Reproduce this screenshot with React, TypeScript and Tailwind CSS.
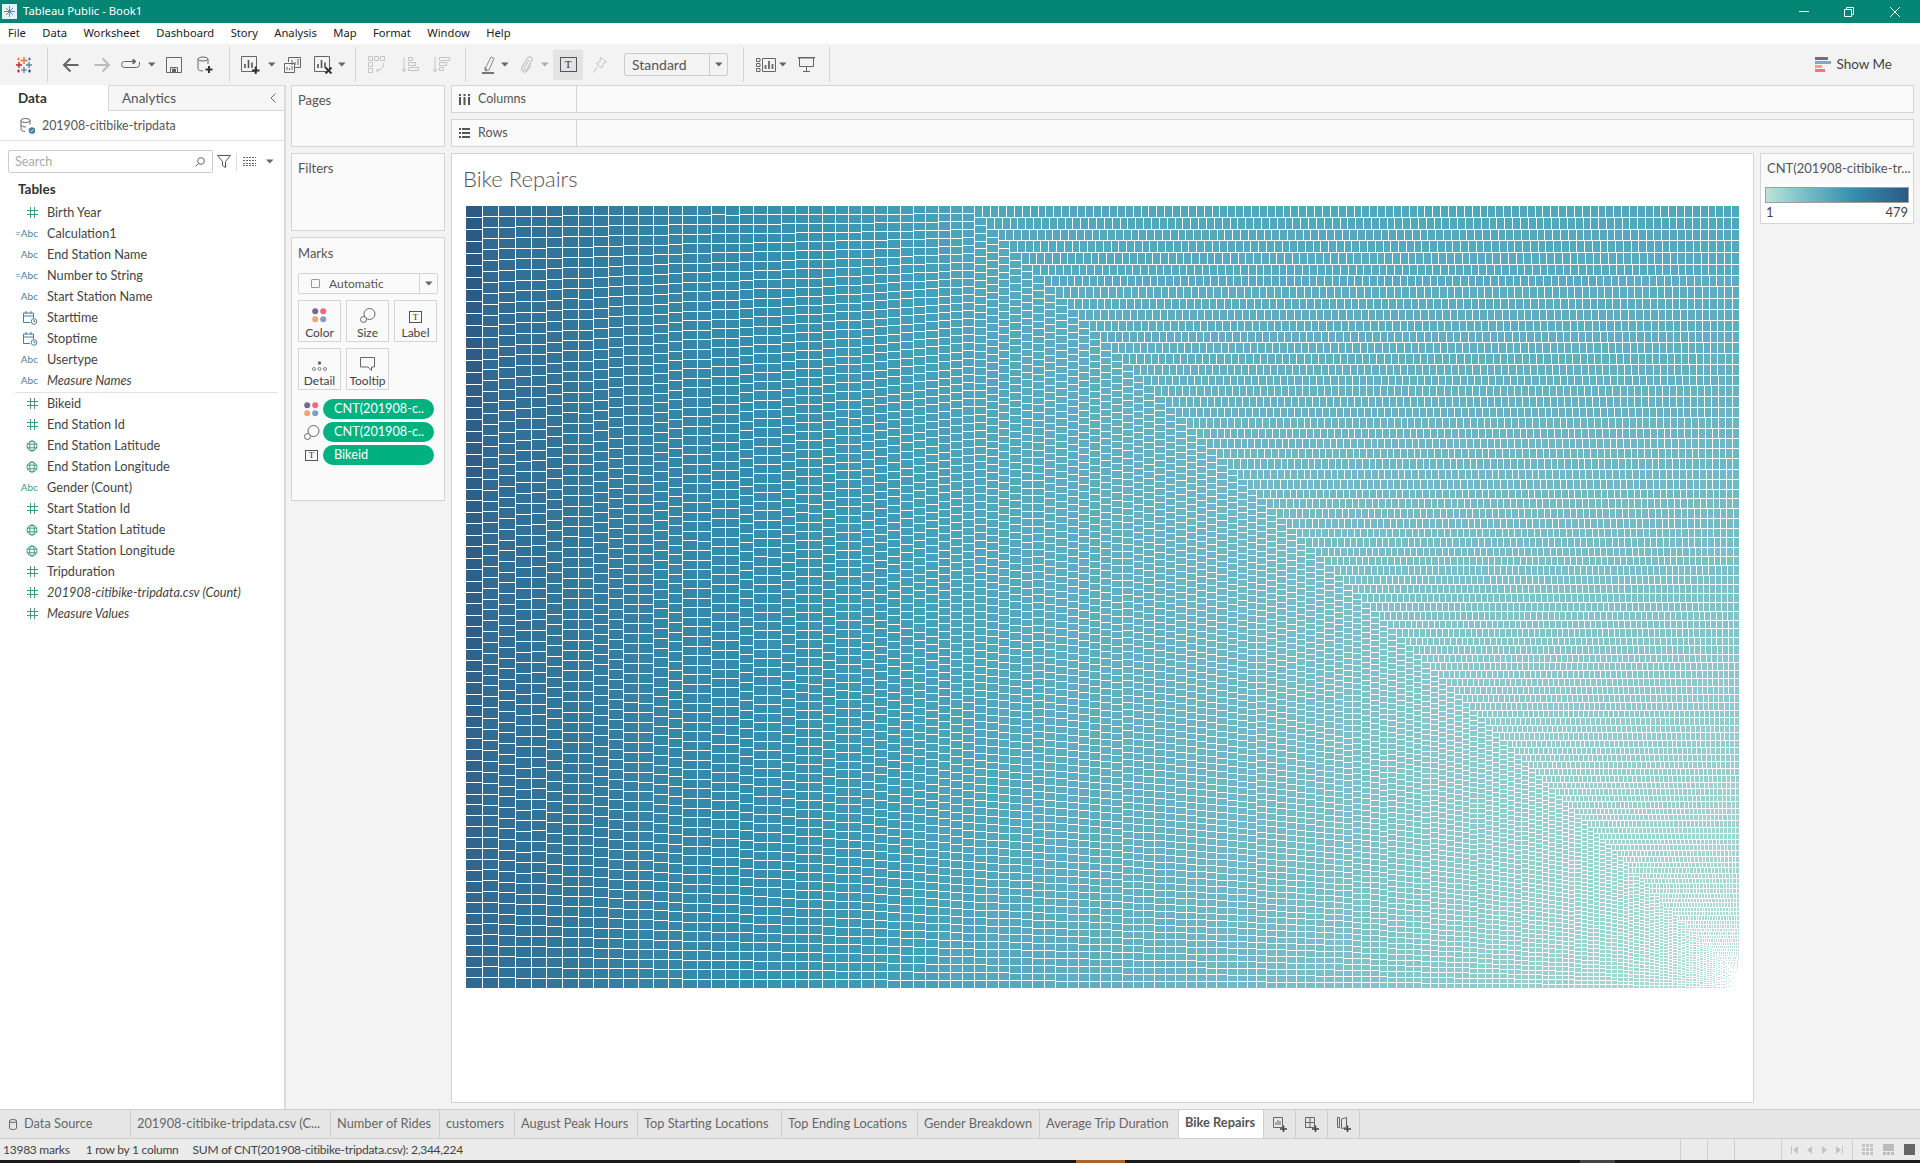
import { useMemo } from "react";

interface IconProps {
    className?: string;
}

const SVG_W = 1274;
const SVG_H = 783;
const MARK_COUNT = 13983;
const PALETTE = [
    "#bce4d8", "#aedcd5", "#a1d5d2", "#95cecf", "#89c8cc", "#7ec1ca", "#72bac6",
    "#66b2c2", "#59acbe", "#4ba5ba", "#419eb6", "#3b96b2", "#358ead", "#3586a7",
    "#347ea1", "#32779b", "#316f96", "#2f6790", "#2d608a", "#2c5985",
];
const BUCKETS = 76;

// rank fraction -> trip count, read off the cell sizes and colours
const VALUE_CURVE = [
    [0, 479], [0.005, 420], [0.02, 395], [0.07, 330], [0.218, 220],
    [0.6, 140], [0.9, 50], [1, 1],
];

const hexToRgb = (hex: string) => [
    parseInt(hex.slice(1, 3), 16),
    parseInt(hex.slice(3, 5), 16),
    parseInt(hex.slice(5, 7), 16),
];

const paletteAt = (t: number) => {
    const p = Math.min(0.9999, Math.max(0, t)) * (PALETTE.length - 1);
    const i = Math.floor(p);
    const a = hexToRgb(PALETTE[i]);
    const b = hexToRgb(PALETTE[i + 1]);
    const rgb = a.map((c, k) => Math.round(c + (b[k] - c) * (p - i)));
    return `rgb(${rgb.join(",")})`;
};

const markValue = (f: number) => {
    for (let i = 1; i < VALUE_CURVE.length; i++) {
        const [f1, v1] = VALUE_CURVE[i];
        if (f <= f1) {
            const [f0, v0] = VALUE_CURVE[i - 1];
            return v0 + ((v1 - v0) * (f - f0)) / (f1 - f0);
        }
    }
    return 1;
};

const buildTreemap = () => {
    const values: number[] = [];
    for (let i = 0; i < MARK_COUNT; i++) {
        values.push(markValue(i / MARK_COUNT));
    }
    const total = values.reduce((s, v) => s + v, 0);
    const scale = (SVG_W * SVG_H) / total;
    const paths: string[] = new Array(BUCKETS).fill("");

    let x = 0;
    let y = 0;
    let w = SVG_W;
    let h = SVG_H;
    let i = 0;
    while (i < MARK_COUNT && w > 0 && h > 0) {
        const vertical = w >= h - 10;
        const side = vertical ? h : w;
        let sum = 0;
        let best = Infinity;
        let end = i;
        let bestSum = 0;
        for (let j = i; j < MARK_COUNT; j++) {
            const next = sum + values[j] * scale;
            const thick = next / side;
            const along = side / (j - i + 1);
            const score = Math.abs(Math.log(thick / along / 1.5));
            if (score > best) break;
            best = score;
            sum = next;
            bestSum = next;
            end = j + 1;
        }
        const thick = bestSum / side;
        let pos = vertical ? y : x;
        for (let j = i; j < end; j++) {
            const len = (values[j] * scale) / thick;
            const cx = vertical ? x : pos;
            const cy = vertical ? pos : y;
            const cw = vertical ? thick : len;
            const ch = vertical ? len : thick;
            const x0 = Math.round(cx);
            const y0 = Math.round(cy);
            const pw = Math.round(cx + cw) - x0 - 1;
            const ph = Math.round(cy + ch) - y0 - 1;
            if (pw > 0 && ph > 0) {
                const t = (values[j] - 1) / 478;
                const b = Math.min(BUCKETS - 1, Math.floor(t * BUCKETS));
                paths[b] += `M${x0} ${y0}h${pw}v${ph}h${-pw}z`;
            }
            pos += len;
        }
        if (vertical) {
            x += thick;
            w -= thick;
        } else {
            y += thick;
            h -= thick;
        }
        i = end;
    }
    return paths;
};

const Treemap = () => {
    const paths = useMemo(buildTreemap, []);
    return (
        <svg width={SVG_W} height={SVG_H} shapeRendering="crispEdges" className="ml-[14px] shrink-0">
            {paths.map((d, b) => (
                <path key={b} d={d} fill={paletteAt((b + 0.5) / BUCKETS)} />
            ))}
        </svg>
    );
};

const Caret = ({ className = "" }: IconProps) => (
    <svg width="8" height="5" viewBox="0 0 8 5" className={className}>
        <path d="M0 0.5h7.5L3.75 4.5z" fill="#666" />
    </svg>
);

const TableauLogo = () => (
    <svg width="18" height="18" viewBox="0 0 18 18" strokeWidth="1.2" fill="none">
        <path d="M9 1v7M5.5 4.5h7" stroke="#e8762b" strokeWidth="1.4" />
        <path d="M9 11v6M6 14h6" stroke="#5b6591" />
        <path d="M4 6v6M1 9h6" stroke="#c72035" strokeWidth="1.4" />
        <path d="M14 6v6M11 9h6" stroke="#59879b" strokeWidth="1.4" />
        <path d="M3.5 1.5v3M2 3h3" stroke="#eb912b" />
        <path d="M14.5 1.5v3M13 3h3" stroke="#4e79a7" />
        <path d="M3.5 13.5v3M2 15h3" stroke="#c72035" />
        <path d="M14.5 13.5v3M13 15h3" stroke="#1f447e" />
    </svg>
);

const BackIcon = ({ color }: { color: string }) => (
    <svg width="17" height="16" viewBox="0 0 17 16" fill="none" stroke={color} strokeWidth="2">
        <path d="M16.5 8H2M8.5 1.5 2 8l6.5 6.5" />
    </svg>
);

const ForwardIcon = ({ color }: { color: string }) => (
    <svg width="17" height="16" viewBox="0 0 17 16" fill="none" stroke={color} strokeWidth="2">
        <path d="M0.5 8H15M8.5 1.5 15 8l-6.5 6.5" />
    </svg>
);

const LoopIcon = () => (
    <svg width="19" height="11" viewBox="0 0 19 11" fill="none" stroke="#666" strokeWidth="1">
        <path d="M12 2.5H3.5a3 3 0 0 0 0 6h12a3 3 0 0 0 3-3V3" />
        <path d="M12 0v5l3-2.5z" fill="#666" />
    </svg>
);

const SaveIcon = () => (
    <svg width="16" height="16" viewBox="0 0 16 16" fill="none" stroke="#666" strokeWidth="1">
        <path d="M0.5 0.5h15v15H0.5zM4.5 15.5v-5h7v5" />
        <path d="M6.5 12h3v3h-3z" fill="#666" />
    </svg>
);

const NewDataIcon = () => (
    <svg width="16" height="18" viewBox="0 0 16 18" fill="none" stroke="#666" strokeWidth="1">
        <ellipse cx="6" cy="3" rx="5" ry="2" />
        <path d="M1 3v10c0 1 2 2 5 2M11 3v5" />
        <path d="M8.5 13.5h7M12 10v7" stroke="#333" strokeWidth="2" />
    </svg>
);

const NewSheetIcon = ({ clear = false }: { clear?: boolean }) => (
    <svg width="19" height="18" viewBox="0 0 19 18" fill="none" stroke="#666" strokeWidth="1">
        <path d="M0.5 0.5h15v15H0.5z" />
        <path d="M4 12V8M7.5 12V4M11 12V6.5" strokeWidth="1.6" stroke="#555" />
        {clear ? (
            <path d="M11.5 11.5l6 6M17.5 11.5l-6 6" stroke="#333" strokeWidth="2" />
        ) : (
            <path d="M11 14.5h7.5M14.7 10.5v7.5" stroke="#333" strokeWidth="2" />
        )}
    </svg>
);

const DuplicateIcon = () => (
    <svg width="17" height="16" viewBox="0 0 17 16" fill="none" stroke="#666" strokeWidth="1">
        <path d="M4.5 5V0.5h12v10H11" />
        <path d="M0.5 6.5h10v9h-10z" fill="#f3f3f3" />
        <path d="M8 8V3M11 8V5M14 8V2M3 13v-3M5.5 13v-2M8 13v-4" />
    </svg>
);

const SwapIcon = () => (
    <svg width="18" height="17" viewBox="0 0 18 17" fill="none" stroke="#c4c4c4" strokeWidth="1">
        <path d="M0.5 0.5h4v4h-4zM6.5 0.5h4v4h-4zM12.5 0.5h4v4h-4zM0.5 6.5h4v4h-4zM0.5 12.5h4v4h-4z" />
        <path d="M15.5 7c.5 4-2 7-6.500 7.500M10.500 12.500 8.500 14.500l2 2" />
    </svg>
);

const SortIcon = ({ desc = false }: { desc?: boolean }) => (
    <svg width="17" height="16" viewBox="0 0 17 16" fill="none" stroke="#c4c4c4" strokeWidth="1">
        <path d="M2 0v14M0 12l2 3 2-3" />
        {desc ? (
            <path d="M6.500 0.500h10v3h-10zM6.500 5.500h7v3h-7zM6.500 10.500h4v3h-4z" />
        ) : (
            <path d="M6.500 0.500h4v3h-4zM6.500 5.500h7v3h-7zM6.500 10.500h10v3h-10z" />
        )}
    </svg>
);

const HighlightIcon = () => (
    <svg width="13" height="18" viewBox="0 0 13 18">
        <path d="M3 13 9 1l3 1.500L7 14l-3.500 1z" fill="none" stroke="#888" />
        <path d="M2 11l3.500 2-2 2.500z" fill="#888" />
        <path d="M0 17h12" stroke="#555" strokeWidth="1.600" />
    </svg>
);

const ClipIcon = () => (
    <svg width="12" height="17" viewBox="0 0 12 17" fill="none" stroke="#c4c4c4" strokeWidth="1.200">
        <path d="M8 4 3 12c-1 2 2 3 3 1l5-9c1-3-3-4-4.500-2L1 11c-2 4 3 7 5.500 3.500L10 9" />
    </svg>
);

const PinIcon = () => (
    <svg width="14" height="16" viewBox="0 0 14 16" fill="none" stroke="#c4c4c4" strokeWidth="1">
        <path d="M7.500 0.500l6 4.500-3 1-1.500 5-6-4.500 4-1.500zM4.500 9.500 0.500 15.500" />
    </svg>
);

const TextBoxIcon = ({ className = "" }: IconProps) => (
    <span className={`flex items-center justify-center border border-[#555] leading-none text-[#333] [font-family:'Liberation_Serif',serif] ${className}`}>
        T
    </span>
);

const ShowCardsIcon = () => (
    <svg width="20" height="14" viewBox="0 0 20 14" fill="none" stroke="#666" strokeWidth="1">
        <path d="M0.500 0.500h3.500v3H0.500zM0.500 5.500h3.500v3H0.500zM0.500 10.500h3.500v3H0.500zM6.500 0.500h13v13h-13z" />
        <path d="M9.500 11V7M13 11V3M16.500 11V6" strokeWidth="1.800" />
    </svg>
);

const PresentIcon = () => (
    <svg width="17" height="15" viewBox="0 0 17 15" fill="none" stroke="#666" strokeWidth="1">
        <path d="M0 0.750h17" strokeWidth="1.500" />
        <path d="M1.500 1v8.500h14V1M8.500 9.500v5M5 14.500h7" />
    </svg>
);

const ShowMeIcon = () => (
    <svg width="16" height="15" viewBox="0 0 16 15">
        <path d="M0 0h13v3H0z" fill="#7b6594" />
        <path d="M0 4h16v3H0z" fill="#83a5cf" />
        <path d="M0 8h7v3H0z" fill="#f4a876" />
        <path d="M0 12h10v3H0z" fill="#fb7186" />
    </svg>
);

const ColorDots = () => (
    <svg width="15" height="15" viewBox="0 0 15 15">
        <circle cx="3.200" cy="3.200" r="3" fill="#7b6594" />
        <circle cx="11.200" cy="3.200" r="3" fill="#ee6a7f" />
        <circle cx="3.200" cy="11.200" r="3" fill="#f0a578" />
        <circle cx="11.200" cy="11.200" r="3" fill="#7f9fca" />
    </svg>
);

const SizeIcon = () => (
    <svg width="16" height="15" viewBox="0 0 16 15" fill="none" stroke="#666" strokeWidth="1">
        <circle cx="9.500" cy="6" r="5.500" />
        <circle cx="3.500" cy="11.500" r="3" fill="#fafafa" />
    </svg>
);

const DetailIcon = () => (
    <svg width="15" height="10" viewBox="0 0 15 10" fill="none" stroke="#666" strokeWidth="0.800">
        <circle cx="7.500" cy="2" r="1.700" fill="#666" stroke="none" />
        <circle cx="2" cy="8" r="1.500" />
        <circle cx="7.500" cy="8" r="1.500" />
        <circle cx="13" cy="8" r="1.500" />
    </svg>
);

const TooltipIcon = () => (
    <svg width="15" height="14" viewBox="0 0 15 14" fill="none" stroke="#666" strokeWidth="1">
        <path d="M0.500 0.500h14v9.500h-3v3.500L8 10H0.500z" />
    </svg>
);

const HashIcon = () => (
    <svg width="11" height="11" viewBox="0 0 11 11" fill="none" stroke="#3f9c80" strokeWidth="1">
        <path d="M3.500 0v11M7.500 0v11M0 3.500h11M0 7.500h11" />
    </svg>
);

const GlobeIcon = () => (
    <svg width="12" height="12" viewBox="0 0 12 12" fill="none" stroke="#3f9c80" strokeWidth="1">
        <circle cx="6" cy="6" r="5" />
        <ellipse cx="6" cy="6" rx="2.300" ry="5" />
        <path d="M1 4.200h10M1 7.800h10" />
    </svg>
);

const CalendarIcon = () => (
    <svg width="15" height="14" viewBox="0 0 15 14" fill="none" stroke="#4d7f98" strokeWidth="1">
        <path d="M7 11.500H0.500v-9.500h10v5M0.500 5h10M3 0v3M8 0v3" />
        <circle cx="11" cy="10.500" r="2.800" />
        <path d="M11 9v1.500h1.500" />
    </svg>
);

const DataSourceIcon = () => (
    <svg width="15" height="16" viewBox="0 0 15 16" fill="none" stroke="#666" strokeWidth="1">
        <ellipse cx="5.500" cy="2.500" rx="4.500" ry="2" />
        <path d="M1 2.500v9c0 1 1.500 1.700 4 2M10 2.500v4M1 7c0 1 2 2 5 2" />
        <circle cx="12" cy="12.500" r="3.300" fill="#3f7fa6" stroke="none" />
        <path d="M10.500 12.500l1 1 2-2" stroke="#fff" />
    </svg>
);

const FilterIcon = () => (
    <svg width="14" height="13" viewBox="0 0 14 13" fill="none" stroke="#555" strokeWidth="1">
        <path d="M0.500 0.500h13L8.500 6.500v6l-3-2v-4z" />
    </svg>
);

const ListViewIcon = () => (
    <svg width="13" height="9" viewBox="0 0 13 9" fill="none" stroke="#666" strokeWidth="1" strokeDasharray="2 1">
        <path d="M0 0.500h13M0 3.500h13M0 6.500h13M0 8.500h13" />
    </svg>
);

const MagnifyIcon = () => (
    <svg width="10" height="10" viewBox="0 0 10 10" fill="none" stroke="#666" strokeWidth="1">
        <circle cx="6" cy="4" r="3.300" />
        <path d="M3.700 6.300 0.500 9.500" />
    </svg>
);

const TabSheetIcon = ({ kind }: { kind: "sheet" | "dash" | "story" }) => (
    <svg width="14" height="15" viewBox="0 0 14 15" fill="none" stroke="#666" strokeWidth="1">
        {kind === "sheet" && <path d="M0.500 0.500h9v10h-9zM3 8V5M5 8V3M7 8V4" />}
        {kind === "dash" && <path d="M0.500 0.500h9v10h-9zM0.500 5.500h9M5 0.500v10" />}
        {kind === "story" && <path d="M0.500 0.500h2v10h-2zM4.500 2l5-1.500v10l-5 1z" />}
        <path d="M7 12h7M10.500 8.500v6.500" stroke="#444" strokeWidth="1.500" />
    </svg>
);

const FIELDS_TOP = [
    { name: "Birth Year", icon: "hash" },
    { name: "Calculation1", icon: "calc" },
    { name: "End Station Name", icon: "abc" },
    { name: "Number to String", icon: "calc" },
    { name: "Start Station Name", icon: "abc" },
    { name: "Starttime", icon: "date" },
    { name: "Stoptime", icon: "date" },
    { name: "Usertype", icon: "abc" },
    { name: "Measure Names", icon: "abc", italic: true },
];

const FIELDS_BOTTOM = [
    { name: "Bikeid", icon: "hash" },
    { name: "End Station Id", icon: "hash" },
    { name: "End Station Latitude", icon: "globe" },
    { name: "End Station Longitude", icon: "globe" },
    { name: "Gender (Count)", icon: "abcGreen" },
    { name: "Start Station Id", icon: "hash" },
    { name: "Start Station Latitude", icon: "globe" },
    { name: "Start Station Longitude", icon: "globe" },
    { name: "Tripduration", icon: "hash" },
    { name: "201908-citibike-tripdata.csv (Count)", icon: "hash", italic: true },
    { name: "Measure Values", icon: "hash", italic: true },
];

const FieldIcon = ({ icon }: { icon: string }) => {
    if (icon === "hash") return <HashIcon />;
    if (icon === "globe") return <GlobeIcon />;
    if (icon === "date") return <CalendarIcon />;
    if (icon === "calc") return <span className="text-[10px] text-[#4d7f98]">=Abc</span>;
    if (icon === "abcGreen") return <span className="text-[10px] text-[#3f9c80]">Abc</span>;
    return <span className="text-[10px] text-[#4d7f98]">Abc</span>;
};

const FieldRow = ({ name, icon, italic }: { name: string; icon: string; italic?: boolean }) => (
    <div className="flex h-[21px] items-center">
        <div className="flex w-[38px] justify-end">
            <FieldIcon icon={icon} />
        </div>
        <span className={`ml-[9px] text-[12.7px] text-[#444] whitespace-nowrap ${italic ? "italic" : ""}`}>
            {name}
        </span>
    </div>
);

const MarkButton = ({ label, children }: { label: string; children: React.ReactNode }) => (
    <div className="flex h-[42px] w-[43px] flex-col items-center border border-[#d4d4d4]">
        <div className="flex h-[22px] items-end">{children}</div>
        <span className="mt-[3px] text-[12px] leading-[14px] text-[#444]">{label}</span>
    </div>
);

const Pill = ({ label, children }: { label: string; children: React.ReactNode }) => (
    <div className="flex h-[20px] items-center">
        <div className="flex w-[25px] justify-center pl-[2px]">{children}</div>
        <div className="flex h-[20px] w-[111px] items-center rounded-full bg-[#02b180] pl-[11px] text-[12.7px] text-white">
            {label}
        </div>
    </div>
);

const TABS = [
    { label: "201908-citibike-tripdata.csv (C...", cls: "w-[200px]" },
    { label: "Number of Rides", cls: "w-[109px]" },
    { label: "customers", cls: "w-[75px]" },
    { label: "August Peak Hours", cls: "w-[123px]" },
    { label: "Top Starting Locations", cls: "w-[144px]" },
    { label: "Top Ending Locations", cls: "w-[136px]" },
    { label: "Gender Breakdown", cls: "w-[122px]" },
    { label: "Average Trip Duration", cls: "w-[139px]" },
];

const MENU = ["File", "Data", "Worksheet", "Dashboard", "Story", "Analysis", "Map", "Format", "Window", "Help"];

const Sep = () => <div className="h-[35px] w-[1px] shrink-0 bg-[#d6d6d6]" />;

const Tool = ({ cls, children }: { cls: string; children?: React.ReactNode }) => (
    <div className={`flex shrink-0 items-center justify-center ${cls}`}>{children}</div>
);

const App = () => {
    return (
        <div className="flex h-[1163px] w-[1920px] flex-col overflow-hidden bg-white text-[#444] [font-family:Lato,sans-serif]">
            {/* title bar */}
            <div className="flex h-[23px] shrink-0 items-center bg-[#038573] text-white">
                <svg width="15" height="15" viewBox="0 0 15 15" className="ml-[2px]">
                    <rect width="15" height="15" fill="#e8f2f5" />
                    <path d="M7.500 2v11M2 7.500h11M4 4l7 7M11 4l-7 7" stroke="#5b8bb0" strokeWidth="1" />
                </svg>
                <span className="ml-[6px] text-[11.3px] [font-family:'Noto_Sans',sans-serif]">Tableau Public - Book1</span>
                <div className="flex-1" />
                <svg width="10" height="1" className="mr-[35px]">
                    <rect width="10" height="1" fill="#fff" />
                </svg>
                <svg width="10" height="10" viewBox="0 0 10 10" fill="none" stroke="#fff" className="mr-[36px]">
                    <path d="M2.500 2.500V0.500h7v7h-2M0.500 2.500h7v7h-7z" />
                </svg>
                <svg width="10" height="10" viewBox="0 0 10 10" fill="none" stroke="#fff" className="mr-[20px]">
                    <path d="M0 0l10 10M10 0 0 10" />
                </svg>
            </div>

            {/* menu bar */}
            <div className="flex h-[21px] shrink-0 items-center gap-[16.4px] bg-white pl-[8px] text-[11.2px] text-[#222] [font-family:'Noto_Sans',sans-serif]">
                {MENU.map((item) => (
                    <span key={item}>{item}</span>
                ))}
            </div>

            {/* toolbar */}
            <div className="flex h-[41px] shrink-0 items-center bg-[#f3f3f3]">
                <Tool cls="w-[47px]"><TableauLogo /></Tool>
                <Sep />
                <Tool cls="w-[44px]"><BackIcon color="#666" /></Tool>
                <Tool cls="w-[20px]"><ForwardIcon color="#bbb" /></Tool>
                <Tool cls="w-[36px]"><LoopIcon /></Tool>
                <Tool cls="w-[8px]"><Caret /></Tool>
                <Tool cls="w-[36px]"><SaveIcon /></Tool>
                <Tool cls="w-[26px]"><NewDataIcon /></Tool>
                <div className="w-[11px] shrink-0" />
                <Sep />
                <Tool cls="ml-[2px] w-[36px]"><NewSheetIcon /></Tool>
                <Tool cls="w-[8px]"><Caret /></Tool>
                <Tool cls="w-[32px]"><DuplicateIcon /></Tool>
                <Tool cls="w-[30px]"><NewSheetIcon clear /></Tool>
                <Tool cls="w-[8px]"><Caret /></Tool>
                <div className="w-[9px] shrink-0" />
                <Sep />
                <Tool cls="w-[42px]"><SwapIcon /></Tool>
                <Tool cls="w-[24px]"><SortIcon /></Tool>
                <Tool cls="w-[38px]"><SortIcon desc /></Tool>
                <div className="w-[5px] shrink-0" />
                <Sep />
                <Tool cls="ml-[10px] w-[24px]"><HighlightIcon /></Tool>
                <Tool cls="ml-[1px] w-[8px]"><Caret /></Tool>
                <Tool cls="ml-[4px] w-[28px]"><ClipIcon /></Tool>
                <Tool cls="w-[8px]"><Caret className="opacity-50" /></Tool>
                <Tool cls="ml-[4px] h-[30px] w-[30px] bg-[#e3e3e3]">
                    <TextBoxIcon className="h-[15px] w-[17px] text-[11px]" />
                </Tool>
                <Tool cls="w-[34px]"><PinIcon /></Tool>
                <div className="ml-[7px] flex h-[23px] w-[104px] shrink-0 items-center rounded-[2px] border border-[#ccc] text-[14px] text-[#555]">
                    <span className="flex-1 pl-[7px]">Standard</span>
                    <div className="flex h-full w-[18px] items-center justify-center border-l border-[#ccc]"><Caret /></div>
                </div>
                <div className="w-[15px] shrink-0" />
                <Sep />
                <Tool cls="ml-[10px] w-[24px]"><ShowCardsIcon /></Tool>
                <Tool cls="ml-[1px] w-[8px]"><Caret /></Tool>
                <Tool cls="w-[38px]"><PresentIcon /></Tool>
                <div className="w-[4px] shrink-0" />
                <Sep />
                <div className="flex-1" />
                <ShowMeIcon />
                <span className="ml-[5px] mr-[28px] text-[13.5px] text-[#444]">Show Me</span>
            </div>

            {/* main area */}
            <div className="flex h-[1024px] shrink-0">
                {/* data pane */}
                <div className="flex w-[286px] shrink-0 flex-col border-r-2 border-[#dcdcdc] bg-white">
                    <div className="flex h-[26px] shrink-0 items-center">
                        <div className="flex h-full w-[108px] items-center pl-[18px] text-[13.5px] font-bold text-[#333]">Data</div>
                        <div className="flex h-full flex-1 items-center justify-between border-b border-l border-t border-[#d8d8d8] bg-[#f6f6f6] pl-[13px] pr-[8px] text-[13.5px] text-[#555]">
                            <span>Analytics</span>
                            <svg width="6" height="10" viewBox="0 0 6 10" fill="none" stroke="#666">
                                <path d="M5.500 0.500 1 5l4.500 4.500" />
                            </svg>
                        </div>
                    </div>
                    <div className="flex h-[30px] shrink-0 items-center border-b border-[#e2e2e2] pl-[20px] pt-[1px] text-[12.4px] text-[#555]">
                        <DataSourceIcon />
                        <span className="ml-[7px]">201908-citibike-tripdata</span>
                    </div>
                    <div className="mt-[9px] flex h-[23px] items-center">
                        <div className="ml-[8px] flex h-[23px] w-[205px] items-center justify-between rounded-[2px] border border-[#ccc] pl-[6px] pr-[7px] text-[12.7px] text-[#aaa]">
                            <span>Search</span>
                            <MagnifyIcon />
                        </div>
                        <div className="ml-[4px] flex w-[14px] justify-center"><FilterIcon /></div>
                        <div className="ml-[5px] h-[18px] w-[1px] bg-[#ddd]" />
                        <div className="ml-[6px]"><ListViewIcon /></div>
                        <div className="ml-[10px]"><Caret /></div>
                    </div>
                    <div className="ml-[18px] mt-[7px] h-[18px] text-[13.5px] font-bold leading-[18px] text-[#333]">Tables</div>
                    <div className="mt-[4px]">
                        {FIELDS_TOP.map((f) => (
                            <FieldRow key={f.name} {...f} />
                        ))}
                        <div className="ml-[15px] mr-[6px] h-[2px] border-b border-[#e2e2e2]" />
                        {FIELDS_BOTTOM.map((f) => (
                            <FieldRow key={f.name} {...f} />
                        ))}
                    </div>
                </div>

                <div className="flex flex-1 bg-[#f3f3f3] pl-[5px] pr-[6px]">
                    {/* pages, filters, marks */}
                    <div className="flex w-[154px] shrink-0 flex-col gap-[6px]">
                        <div className="h-[62px] border border-[#d4d4d4] bg-[#fafafa] pl-[6px] pt-[5px] text-[13px] text-[#555]">Pages</div>
                        <div className="h-[78px] border border-[#d4d4d4] bg-[#fafafa] pl-[6px] pt-[5px] text-[13px] text-[#555]">Filters</div>
                        <div className="h-[264px] border border-[#d4d4d4] bg-[#fafafa] px-[6px]">
                            <div className="pt-[5px] text-[13px] leading-[20px] text-[#555]">Marks</div>
                            <div className="mt-[10px] flex h-[21px] items-center rounded-[2px] border border-[#d4d4d4] text-[12px] text-[#555]">
                                <div className="ml-[12px] h-[9px] w-[9px] rounded-[1px] border border-[#999]" />
                                <span className="ml-[9px] flex-1">Automatic</span>
                                <div className="flex h-full w-[18px] items-center justify-center border-l border-[#d4d4d4]"><Caret /></div>
                            </div>
                            <div className="mt-[6px] flex gap-[5px]">
                                <MarkButton label="Color"><ColorDots /></MarkButton>
                                <MarkButton label="Size"><SizeIcon /></MarkButton>
                                <MarkButton label="Label"><TextBoxIcon className="h-[12px] w-[13px] text-[9px]" /></MarkButton>
                            </div>
                            <div className="mt-[6px] flex gap-[5px]">
                                <MarkButton label="Detail"><DetailIcon /></MarkButton>
                                <MarkButton label="Tooltip"><TooltipIcon /></MarkButton>
                            </div>
                            <div className="mt-[9px] flex flex-col gap-[3px]">
                                <Pill label="CNT(201908-c.."><ColorDots /></Pill>
                                <Pill label="CNT(201908-c.."><SizeIcon /></Pill>
                                <Pill label="Bikeid"><TextBoxIcon className="h-[11px] w-[13px] text-[9px]" /></Pill>
                            </div>
                        </div>
                    </div>

                    {/* shelves and view */}
                    <div className="ml-[6px] flex flex-1 flex-col">
                        <div className="flex h-[28px] shrink-0 border border-[#d4d4d4] bg-[#fafafa]">
                            <div className="flex w-[125px] items-center border-r border-[#d4d4d4] pl-[7px] text-[12.5px] text-[#555]">
                                <svg width="11" height="11" viewBox="0 0 11 11" fill="#555"><path d="M0 3h2v8H0zM4.500 3h2v8h-2zM9 3h2v8H9zM0 0h2v2H0zM4.500 0h2v2h-2zM9 0h2v2H9z" /></svg>
                                <span className="ml-[8px]">Columns</span>
                            </div>
                        </div>
                        <div className="mt-[6px] flex h-[28px] shrink-0 border border-[#d4d4d4] bg-[#fafafa]">
                            <div className="flex w-[125px] items-center border-r border-[#d4d4d4] pl-[7px] text-[12.5px] text-[#555]">
                                <svg width="11" height="10" viewBox="0 0 11 10" fill="#555"><path d="M0 0h2v2H0zM3 0h8v2H3zM0 4h2v2H0zM3 4h8v2H3zM0 8h2v2H0zM3 8h8v2H3z" /></svg>
                                <span className="ml-[8px]">Rows</span>
                            </div>
                        </div>
                        <div className="mt-[6px] flex gap-[6px]">
                            <div className="flex h-[950px] w-[1303px] shrink-0 flex-col border border-[#d4d4d4] bg-white">
                                <div className="ml-[11px] mt-[11px] h-[41px] text-[22px] font-light leading-[27px] text-[#555]">Bike Repairs</div>
                                <Treemap />
                            </div>
                            <div className="h-[71px] flex-1 border border-[#d4d4d4] bg-white">
                                <div className="flex h-[30px] items-center bg-[#fafafa] pl-[6px] text-[13px] text-[#555]">CNT(201908-citibike-tr...</div>
                                <div className="mx-[4px] mt-[3px] h-[16px] border border-[#a09f97] bg-[linear-gradient(to_right,#bce4d8,#72bac6_30%,#358ead_62%,#2c5985)]" />
                                <div className="mx-[5px] mt-[2px] flex justify-between text-[13px] leading-[15px] text-[#444]">
                                    <span>1</span>
                                    <span>479</span>
                                </div>
                            </div>
                        </div>
                    </div>
                </div>
            </div>

            {/* sheet tabs */}
            <div className="flex h-[30px] shrink-0 items-stretch border-y border-[#cfcfcf] bg-[#e6e6e6] text-[12.8px] text-[#666]">
                <div className="flex w-[131px] items-center border-r border-[#cfcfcf] pl-[9px]">
                    <svg width="8" height="11" viewBox="0 0 8 11" fill="none" stroke="#666">
                        <ellipse cx="4" cy="2" rx="3.500" ry="1.500" />
                        <path d="M0.500 2v7c0 2 7 2 7 0V2" />
                    </svg>
                    <span className="ml-[7px]">Data Source</span>
                </div>
                {TABS.map((t) => (
                    <div key={t.label} className={`flex items-center whitespace-nowrap border-r border-[#cfcfcf] pl-[6px] ${t.cls}`}>
                        {t.label}
                    </div>
                ))}
                <div className="flex w-[85px] items-center whitespace-nowrap border-r border-[#cfcfcf] bg-white pb-[3px] pl-[6px] font-bold text-[#555]">
                    Bike Repairs
                </div>
                <div className="flex w-[32px] items-center justify-center border-r border-[#cfcfcf]"><TabSheetIcon kind="sheet" /></div>
                <div className="flex w-[32px] items-center justify-center border-r border-[#cfcfcf]"><TabSheetIcon kind="dash" /></div>
                <div className="flex w-[32px] items-center justify-center border-r border-[#cfcfcf]"><TabSheetIcon kind="story" /></div>
            </div>

            {/* status bar */}
            <div className="flex h-[21px] shrink-0 items-center bg-[#ebebeb] pl-[3px] text-[12px] tracking-[-0.25px] text-[#444]">
                <span>13983 marks</span>
                <span className="ml-[16px]">1 row by 1 column</span>
                <span className="ml-[14px]">SUM of CNT(201908-citibike-tripdata.csv): 2,344,224</span>
                <div className="flex-1" />
                <div className="h-full w-[27px] border-l border-[#cfcfcf]" />
                <div className="h-full w-[27px] border-l border-[#cfcfcf]" />
                <div className="h-full w-[47px] border-l border-[#cfcfcf]" />
                <div className="flex h-full w-[71px] items-center justify-around border-l border-[#cfcfcf] px-[4px]">
                    <svg width="7" height="8" viewBox="0 0 7 8" fill="#c4c4c4"><path d="M0 0h1v8H0zM7 0v8L2 4z" /></svg>
                    <svg width="5" height="8" viewBox="0 0 5 8" fill="#c4c4c4"><path d="M5 0v8L0 4z" /></svg>
                    <svg width="5" height="8" viewBox="0 0 5 8" fill="#c4c4c4"><path d="M0 0v8l5-4z" /></svg>
                    <svg width="7" height="8" viewBox="0 0 7 8" fill="#c4c4c4"><path d="M6 0h1v8H6zM0 0v8l5-4z" /></svg>
                </div>
                <div className="flex h-full w-[68px] items-center gap-[10px] border-l border-[#cfcfcf] pl-[9px]">
                    <svg width="11" height="11" viewBox="0 0 11 11" fill="#c4c4c4"><path d="M0 0h3v3H0zM4 0h3v3H4zM8 0h3v3H8zM0 4h3v3H0zM4 4h3v3H4zM8 4h3v3H8zM0 8h3v3H0zM4 8h3v3H4zM8 8h3v3H8z" /></svg>
                    <svg width="11" height="11" viewBox="0 0 11 11" fill="#bbb"><path d="M0 0h11v7H0zM0 8h3v3H0zM4 8h3v3H4zM8 8h3v3H8z" /></svg>
                    <svg width="11" height="11" viewBox="0 0 11 11" fill="#666"><path d="M0 0h11v11H0z" /></svg>
                </div>
            </div>

            {/* bottom edge of the desktop */}
            <div className="flex h-[3px] shrink-0 bg-[#1a1a1a]">
                <div className="ml-[1076px] h-full w-[49px] bg-[#a9632b]" />
                <div className="ml-[455px] h-full w-[35px] bg-[#444]" />
            </div>
        </div>
    );
};

export default App;
